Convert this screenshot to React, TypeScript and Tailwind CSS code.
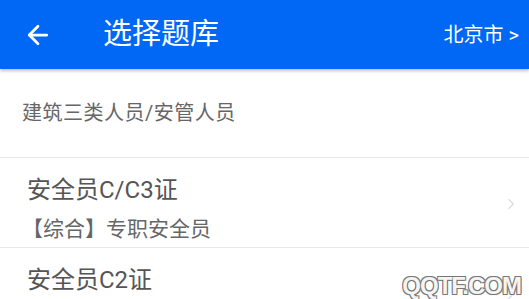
import { ArrowLeft, ChevronRight } from 'lucide-react'

const font = { fontFamily: 'Roboto, "Noto Sans CJK SC", sans-serif' }

const items = [
  { title: '安全员C/C3证', sub: '【综合】专职安全员' },
  { title: '安全员C2证', sub: '【综合】专职安全员' },
]

export default function App() {
  return (
    <div
      className="relative h-[299px] w-[529px] overflow-hidden bg-white"
      style={font}
    >
      <div className="relative z-10 flex h-[69px] items-center bg-[#0068f5] pl-[23px] pr-[10px] text-white shadow-[0_2px_3px_rgba(0,0,0,0.25)]">
        <ArrowLeft className="h-[30px] w-[30px]" strokeWidth={2.2} />
        <div className="ml-[50px] text-[29px] leading-none">选择题库</div>
        <div className="ml-auto text-[20px] leading-none">北京市 &gt;</div>
      </div>

      <div className="flex h-[89px] items-center border-b border-[#e8e8e8] pl-[22px] text-[20px] tracking-[0.5px] text-[#666]">
        建筑三类人员/安管人员
      </div>

      {items.map((item, index) => (
        <div
          key={index}
          className="flex h-[90px] items-start border-b border-[#e8e8e8] pr-[9px] pt-[17px]"
        >
          <div className="flex flex-1 flex-col">
            <div className="pl-[27px] text-[24px] leading-[30px] text-[#555]">
              {item.title}
            </div>
            <div className="mt-[10px] pl-[22px] text-[21px] leading-[28px] text-[#666]">
              {item.sub}
            </div>
          </div>
          <ChevronRight className="mt-[18px] h-[22px] w-[18px] self-start text-[#d8dcdf]" strokeWidth={1.6} />
        </div>
      ))}

      <div
        className="absolute bottom-[1px] right-[8px] text-[24px] font-bold leading-none tracking-[-1px] text-[#f4f4f4] [text-shadow:_-1px_-1px_0_#777,1px_-1px_0_#777,-1px_1px_0_#777,1px_1px_0_#777]"
        style={{ fontFamily: '"Liberation Sans", sans-serif' }}
      >
        QQTF.COM
      </div>
    </div>
  )
}
